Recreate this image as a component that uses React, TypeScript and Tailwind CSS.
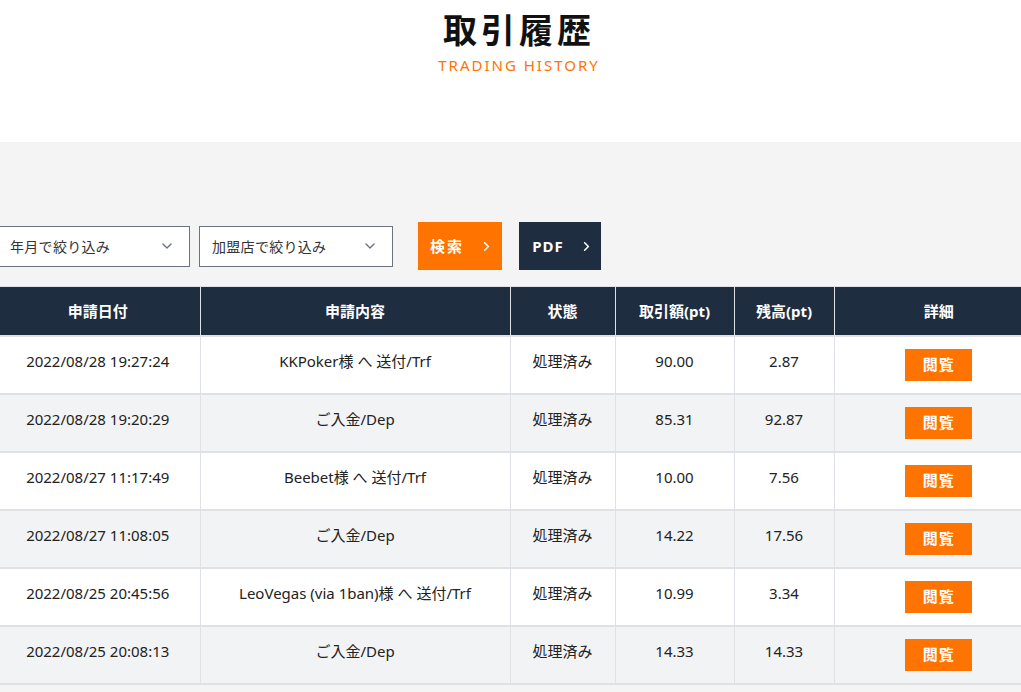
import { ChevronDown, ChevronRight } from "lucide-react";

type Row = {
  date: string;
  content: string;
  status: string;
  amount: string;
  balance: string;
};

const rows: Row[] = [
  { date: "2022/08/28 19:27:24", content: "KKPoker様 へ 送付/Trf", status: "処理済み", amount: "90.00", balance: "2.87" },
  { date: "2022/08/28 19:20:29", content: "ご入金/Dep", status: "処理済み", amount: "85.31", balance: "92.87" },
  { date: "2022/08/27 11:17:49", content: "Beebet様 へ 送付/Trf", status: "処理済み", amount: "10.00", balance: "7.56" },
  { date: "2022/08/27 11:08:05", content: "ご入金/Dep", status: "処理済み", amount: "14.22", balance: "17.56" },
  { date: "2022/08/25 20:45:56", content: "LeoVegas (via 1ban)様 へ 送付/Trf", status: "処理済み", amount: "10.99", balance: "3.34" },
  { date: "2022/08/25 20:08:13", content: "ご入金/Dep", status: "処理済み", amount: "14.33", balance: "14.33" },
];

const headers = ["申請日付", "申請内容", "状態", "取引額(pt)", "残高(pt)", "詳細"];
const colWidths = ["w-[204px]", "w-[310px]", "w-[105px]", "w-[119px]", "w-[100px]", "w-[209px]"];

export default function App() {
  return (
    <div className="h-[692px] w-[1021px] overflow-hidden bg-[#f4f4f4] font-['Noto_Sans','Noto_Sans_CJK_JP',sans-serif] text-[#222]">
      <header className="h-[142px] bg-white pl-[17px] pt-[6px] text-center">
        <h1 className="text-[34px] leading-[48px] font-bold tracking-[4px] text-[#111]">
          取引履歴
        </h1>
        <p className="mt-[1px] text-[15px] leading-[20px] tracking-[2px] text-[#ff7300]">
          TRADING HISTORY
        </p>
      </header>

      <section className="ml-[-4px] w-[1047px] pt-[80px]">
        <div className="flex items-center">
          <div className="flex h-[41px] w-[194px] items-center justify-between border border-[#6b7280] bg-white pr-[14px] pl-[13px] text-[14px] tracking-[0.3px] text-[#333]">
            <span>年月で絞り込み</span>
            <ChevronDown className="h-[16px] w-[16px] text-[#6b7280]" strokeWidth={2} />
          </div>
          <div className="ml-[9px] flex h-[41px] w-[194px] items-center justify-between border border-[#6b7280] bg-white pr-[14px] pl-[12px] text-[14px] tracking-[0.3px] text-[#333]">
            <span>加盟店で絞り込み</span>
            <ChevronDown className="h-[16px] w-[16px] text-[#6b7280]" strokeWidth={2} />
          </div>
          <button
            type="button"
            className="ml-[25px] flex h-[48px] w-[84px] items-center justify-center gap-[15px] bg-[#ff7300] pl-[4px] text-[15px] font-bold tracking-[2px] text-white"
          >
            <span>検索</span>
            <ChevronRight className="h-[15px] w-[15px]" strokeWidth={2.5} />
          </button>
          <button
            type="button"
            className="ml-[17px] flex h-[48px] w-[82px] items-center justify-center gap-[15px] bg-[#1e2d40] pl-[6px] text-[15px] font-bold tracking-[1px] text-white"
          >
            <span>PDF</span>
            <ChevronRight className="h-[15px] w-[15px]" strokeWidth={2.5} />
          </button>
        </div>

        <table className="mt-[16px] w-[1047px] table-fixed border-collapse border-t border-[#dfe1e6] text-[15px]">
          <thead>
            <tr className="h-[49px] bg-[#1e2d40] text-white">
              {headers.map((h, i) => (
                <th
                  key={h}
                  className={`${colWidths[i]} border-l border-[#dfe1e6] font-bold first:border-l-0`}
                >
                  {h}
                </th>
              ))}
            </tr>
          </thead>
          <tbody>
            {rows.map((row, i) => (
              <tr
                key={row.date}
                className={`h-[58px] border-t-2 border-[#dfe1e6] ${i % 2 === 0 ? "bg-white" : "bg-[#f2f3f5]"}`}
              >
                <td className="pb-[6px] text-center">{row.date}</td>
                <td className="border-l border-[#dfe1e6] pb-[6px] text-center">{row.content}</td>
                <td className="border-l border-[#dfe1e6] pb-[6px] text-center">{row.status}</td>
                <td className="border-l border-[#dfe1e6] pb-[6px] text-center">{row.amount}</td>
                <td className="border-l border-[#dfe1e6] pb-[6px] text-center">{row.balance}</td>
                <td className="border-l border-[#dfe1e6] text-center">
                  <button
                    type="button"
                    className="h-[32px] w-[67px] bg-[#ff7300] text-[15px] font-bold tracking-[1px] text-white"
                  >
                    閲覧
                  </button>
                </td>
              </tr>
            ))}
            <tr className="border-t-2 border-[#dfe1e6]" />
          </tbody>
        </table>
      </section>
    </div>
  );
}
